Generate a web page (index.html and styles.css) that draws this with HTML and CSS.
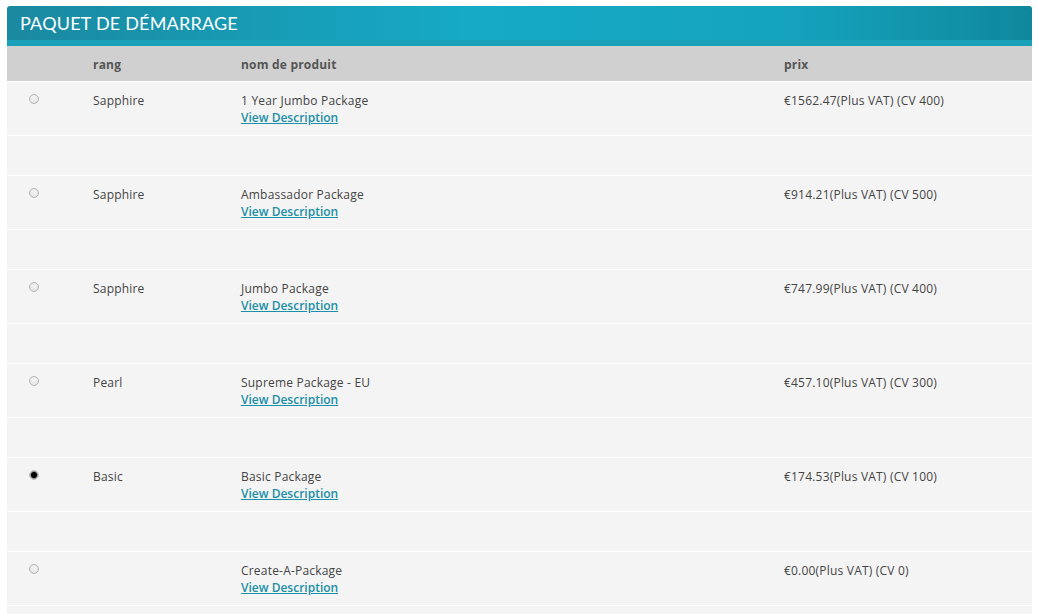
FILE: index.html
```html
<!DOCTYPE html>
<html lang="fr">
<head>
    <meta charset="UTF-8">
    <title>Paquet de démarrage</title>
    <link rel="stylesheet" href="styles.css">
</head>
<body>
    <div class="panel">
        <div class="panel-title">Paquet de démarrage</div>
        <table class="packages">
            <colgroup>
                <col class="col-pick">
                <col class="col-rank">
                <col class="col-name">
                <col>
            </colgroup>
            <thead>
                <tr>
                    <th></th>
                    <th>rang</th>
                    <th>nom de produit</th>
                    <th>prix</th>
                </tr>
            </thead>
            <tbody>
                <tr class="item">
                    <td><input type="radio" name="package"></td>
                    <td>Sapphire</td>
                    <td>1 Year Jumbo Package<br><a href="#">View Description</a></td>
                    <td>€1562.47(Plus VAT) (CV 400)</td>
                </tr>
                <tr class="spacer"><td colspan="4"></td></tr>

                <tr class="item">
                    <td><input type="radio" name="package"></td>
                    <td>Sapphire</td>
                    <td>Ambassador Package<br><a href="#">View Description</a></td>
                    <td>€914.21(Plus VAT) (CV 500)</td>
                </tr>
                <tr class="spacer"><td colspan="4"></td></tr>

                <tr class="item">
                    <td><input type="radio" name="package"></td>
                    <td>Sapphire</td>
                    <td>Jumbo Package<br><a href="#">View Description</a></td>
                    <td>€747.99(Plus VAT) (CV 400)</td>
                </tr>
                <tr class="spacer"><td colspan="4"></td></tr>

                <tr class="item">
                    <td><input type="radio" name="package"></td>
                    <td>Pearl</td>
                    <td>Supreme Package - EU<br><a href="#">View Description</a></td>
                    <td>€457.10(Plus VAT) (CV 300)</td>
                </tr>
                <tr class="spacer"><td colspan="4"></td></tr>

                <tr class="item">
                    <td><input type="radio" name="package" checked></td>
                    <td>Basic</td>
                    <td>Basic Package<br><a href="#">View Description</a></td>
                    <td>€174.53(Plus VAT) (CV 100)</td>
                </tr>
                <tr class="spacer"><td colspan="4"></td></tr>

                <tr class="item">
                    <td><input type="radio" name="package"></td>
                    <td></td>
                    <td>Create-A-Package<br><a href="#">View Description</a></td>
                    <td>€0.00(Plus VAT) (CV 0)</td>
                </tr>
                <tr class="spacer"><td colspan="4"></td></tr>
            </tbody>
        </table>
    </div>
</body>
</html>
```

FILE: styles.css
```css
body {
    margin: 0;
    padding: 0;
    background-color: #fff;
    font-family: "Open Sans", "Liberation Sans", sans-serif;
    font-size: 12px;
    letter-spacing: 0.2px;
    color: #444;
}

.panel {
    margin: 6px 7px 0 7px;
}

/* title bar with the lighter strip under it */
.panel-title {
    height: 34px;
    line-height: 34px;
    padding-left: 13px;
    border-radius: 3px 3px 0 0;
    border-bottom: 6px solid #19a2ba;
    background: linear-gradient(to right, #1a89a0 0%, #16aac6 45%, #15a4bf 75%, #0f889d 100%);
    color: #fff;
    font-family: Lato, "Open Sans", sans-serif;
    font-size: 18px;
    letter-spacing: 0.2px;
    text-transform: uppercase;
}

.packages {
    width: 100%;
    border-collapse: collapse;
    table-layout: fixed;
}

.col-pick {
    width: 78px;
}

.col-rank {
    width: 148px;
}

.col-name {
    width: 543px;
}

.packages th {
    height: 34px;
    padding: 1px 8px 0 8px;
    background-color: #d0d0d0;
    color: #555;
    font-weight: bold;
    text-align: left;
    border-bottom: 1px solid #fff;
}

.packages td {
    padding: 10px 8px 9px 8px;
    line-height: 17px;
    vertical-align: top;
    background-color: #f4f4f4;
    border-bottom: 1px solid #fff;
}

.packages td:first-child,
.packages th:first-child {
    padding-left: 22px;
}

.spacer td {
    height: 39px;
    padding: 0;
}

.packages a {
    color: #1a8fa6;
    font-weight: 600;
    letter-spacing: 0;
    text-decoration: underline;
}

/* small grey radio like the old browser one */
input[type="radio"] {
    -webkit-appearance: none;
    appearance: none;
    width: 10px;
    height: 10px;
    margin: 2px 0 0 0;
    border: 1px solid #b8b8b8;
    border-radius: 50%;
    background: radial-gradient(circle at 50% 40%, #f6f6f6 0%, #dcdcdc 100%);
    vertical-align: top;
}

input[type="radio"]:checked {
    background: radial-gradient(circle, #000 0%, #000 45%, #888 60%, #e0e0e0 100%);
    border-color: #c8c8c8;
}
```
